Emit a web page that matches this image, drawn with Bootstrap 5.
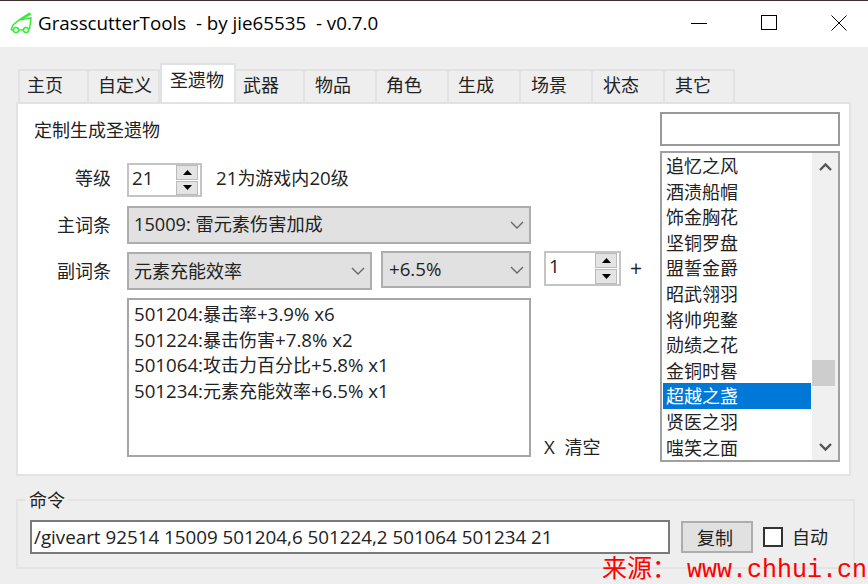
<!DOCTYPE html>
<html lang="zh-CN">
<head>
<meta charset="utf-8">
<title>GrasscutterTools</title>
<link href="https://cdn.jsdelivr.net/npm/bootstrap@5.3.0/dist/css/bootstrap.min.css" rel="stylesheet">
<style>
html,body{height:100%;}
body{background:#eee;color:#222;font:18.7px/26px "Open Sans","Noto Sans CJK SC",sans-serif;overflow:hidden;position:relative;}
.cj{font-size:18px;}
.titlebar{height:47px;background:#fff;border-top:1px solid #3b2e2c;color:#000;padding:0 21px 3px 10px;}
.titlebar .tt{margin-left:6px;white-space:pre;font-size:18.75px;}
.wincontrols{gap:54px;}
.tabstrip{margin:18px 0 0 18px;height:37px;border:0;flex-wrap:nowrap;}
.tabstrip .nav-link{height:33px;margin:4px 0 0 0;padding:0 0 0 9px;border:2px solid #e2e2e2;border-bottom:0;border-left-width:0;border-radius:0;background:#eee;color:#222;line-height:28px;font-size:18px;width:72px;}
.tabstrip .nav-item:first-child .nav-link{width:71px;border-left-width:2px;padding-left:7px;}
.tabstrip .nav-link.active{height:39px;margin-top:-2px;width:76px;padding:1px 0 0 8px;background:#fff;color:#222;border-left-width:2px;position:relative;z-index:2;}
.tabstrip .nav-item:nth-child(2) .nav-link{width:71px;}
.tabstrip .nav-item:nth-child(4) .nav-link{width:69px;padding-left:7px;}
.tabstrip .nav-item:nth-child(5) .nav-link,.tabstrip .nav-item:nth-child(8) .nav-link,.tabstrip .nav-item:nth-child(9) .nav-link,.tabstrip .nav-item:nth-child(10) .nav-link{padding-left:10px;}
.tabstrip .nav-item:last-child .nav-link{width:70px;}
.panel{margin-left:16px;width:835px;height:374px;background:#fff;border:2px solid #e2e2e2;}
.leftcol{width:642px;}
.headline{height:59px;padding:13px 0 0 16px;}
.lab{width:93px;margin-right:16px;text-align:right;}
.row1{height:34px;}
.row2{height:38px;margin-top:9px;}
.row3{height:39px;margin-top:7px;}
.row4{height:159px;margin-top:8px;}
.row1 .lab,.row1 .note{margin-top:-4px;}
.note{margin-left:14px;}
.spin{border:2px solid #c4c4c4;height:34px;background:#fff;padding:0 2px;}
.spin1{width:75px;}
.spin2{width:77px;height:35px;margin-left:13px;}
.spinval{flex:1;padding-left:1px;line-height:26px;}
.spinbtns{width:22px;gap:1px;}
.spinbtns i{display:flex;flex:1;align-items:center;justify-content:center;background:#e4e4e4;border:1px solid #bbb;}
.dd{appearance:none;border:2px solid #adadad;border-radius:0;background-color:#e1e1e1;background-image:url("data:image/svg+xml,%3Csvg xmlns='http://www.w3.org/2000/svg' width='14' height='8' fill='none' stroke='%23666' stroke-width='1.4'%3E%3Cpath d='M1 1l6 6 6-6'/%3E%3C/svg%3E");background-size:14px 8px;background-position:right 5px center;height:38px;padding:0 24px 0 5px;color:#222;font-size:18.2px;box-shadow:none;}
.dd-main{width:404px;}
.dd-a{width:245px;margin-top:1px;font-size:18px;}
.dd-b{width:150px;height:37px;margin-left:9px;padding-left:6px;font-size:18.7px;}
.plus{margin-left:9px;line-height:34px;font-size:21px;}
.memo{width:404px;height:159px;border:2px solid #a6a6a6;padding:1px 5px;}
.memo div{white-space:pre;height:25.6px;line-height:25.6px;}
.clearx{margin:0 0 -2px 13px;line-height:24px;white-space:pre;}
.rightcol{width:180px;padding-top:8px;}
.searchbox{height:34px;border:2px solid #999;border-radius:0;padding:0 4px;box-shadow:none;}
.listwrap{height:311px;margin-top:5px;border:2px solid #a0a0a0;}
.arlist{flex:1;padding:0 1px;overflow:hidden;}
.aritem{height:25.6px;line-height:26px;padding-left:3px;font-size:18px;}
.aritem.sel{background:#0078d7;color:#fff;}
.sbar{width:26px;background:#f0f0f0;}
.sarrow{height:26px;}
.sthumb{width:23px;height:26px;margin-top:181px;background:#cdcdcd;}
.grp{margin:23px 0 0 16px;width:839px;height:70px;border:2px solid #e4e4e4;position:relative;padding:19px 0 0 12px;}
.grplab{position:absolute;left:8px;top:-14px;background:#eee;padding:0 3px;font-size:18px;line-height:26px;}
.cmd{width:640px;height:34px;border:2px solid #7a7a7a;border-radius:0;padding:0 2px;font-size:18.8px;color:#222;box-shadow:none;}
.copybtn{width:72px;height:32px;margin:1px 0 0 11px;background:#e1e1e1;border:2px solid #adadad;border-radius:0;padding:2px 4px 0 0;color:#222;font-size:18px;line-height:26px;}
.copybtn:hover{background:#e1e1e1;border-color:#adadad;color:#222;}
.checkwrap .tick{width:20px;height:20px;margin:0;border:2px solid #333;border-radius:0;float:none;}
.autolab{margin-left:9px;font-size:18px;}
.checkwrap{margin:0 0 0 10px;padding:0;min-height:0;height:34px;}
.wm{position:absolute;left:602px;top:558px;color:#f00;white-space:pre;font:25px/25px "Liberation Mono","Noto Sans CJK SC",monospace;}
.wm b{font-weight:400;margin-left:10px;}
</style>
</head>
<body>
<div class="titlebar d-flex align-items-center">
  <svg width="22" height="22" viewBox="0 0 22 22" fill="none" stroke="#3be93b" stroke-width="1.5"><path d="M1 18 L3 13 L9 8 L21 6 L19.500 17 H18.500 M13.500 18 H8.500 M3.500 18 H1 M9 8 L20 1 M12 6.500 L21 2"/><circle cx="6" cy="18" r="2.500"/><circle cx="16" cy="18" r="2.500"/></svg>
  <span class="tt">GrasscutterTools  - by jie65535  - v0.7.0</span>
  <div class="ms-auto d-flex wincontrols">
    <svg width="16" height="16" stroke="#000"><path d="M0 8.5H16"/></svg>
    <svg width="16" height="16" fill="none" stroke="#000"><rect x=".5" y=".5" width="15" height="14"/></svg>
    <svg width="16" height="16" stroke="#000"><path d="M.5 .5L15.5 15.5M15.5 .5L.5 15.5"/></svg>
  </div>
</div>
<ul class="nav nav-tabs tabstrip">
  <li class="nav-item"><a class="nav-link" href="#">主页</a></li>
  <li class="nav-item"><a class="nav-link" href="#">自定义</a></li>
  <li class="nav-item"><a class="nav-link active" href="#">圣遗物</a></li>
  <li class="nav-item"><a class="nav-link" href="#">武器</a></li>
  <li class="nav-item"><a class="nav-link" href="#">物品</a></li>
  <li class="nav-item"><a class="nav-link" href="#">角色</a></li>
  <li class="nav-item"><a class="nav-link" href="#">生成</a></li>
  <li class="nav-item"><a class="nav-link" href="#">场景</a></li>
  <li class="nav-item"><a class="nav-link" href="#">状态</a></li>
  <li class="nav-item"><a class="nav-link" href="#">其它</a></li>
</ul>
<div class="panel d-flex">
  <div class="leftcol">
    <div class="headline cj">定制生成圣遗物</div>
    <div class="d-flex row1 align-items-center">
      <div class="lab cj">等级</div>
      <div class="spin spin1 d-flex"><span class="spinval">21</span><span class="spinbtns d-flex flex-column"><i><svg width="9" height="5"><path d="M4.5 0L9 5H0Z"/></svg></i><i><svg width="9" height="5"><path d="M0 0H9L4.5 5Z"/></svg></i></span></div>
      <div class="note">21<span class="cj">为游戏内</span>20<span class="cj">级</span></div>
    </div>
    <div class="d-flex row2 align-items-center">
      <div class="lab cj">主词条</div>
      <select class="form-select dd dd-main"><option>15009: 雷元素伤害加成</option></select>
    </div>
    <div class="d-flex row3 align-items-center">
      <div class="lab cj">副词条</div>
      <select class="form-select dd dd-a align-self-start"><option>元素充能效率</option></select>
      <select class="form-select dd dd-b align-self-start"><option>+6.5%</option></select>
      <div class="spin spin2 d-flex align-self-start"><span class="spinval">1</span><span class="spinbtns d-flex flex-column"><i><svg width="9" height="5"><path d="M4.5 0L9 5H0Z"/></svg></i><i><svg width="9" height="5"><path d="M0 0H9L4.5 5Z"/></svg></i></span></div>
      <div class="plus align-self-start">+</div>
    </div>
    <div class="d-flex row4 align-items-end">
      <div class="lab"></div>
      <div class="memo">
        <div>501204:<span class="cj">暴击率</span>+3.9% x6</div>
        <div>501224:<span class="cj">暴击伤害</span>+7.8% x2</div>
        <div>501064:<span class="cj">攻击力百分比</span>+5.8% x1</div>
        <div>501234:<span class="cj">元素充能效率</span>+6.5% x1</div>
      </div>
      <div class="clearx">X  <span class="cj">清空</span></div>
    </div>
  </div>
  <div class="rightcol">
    <input class="form-control searchbox" type="text" aria-label="搜索">
    <div class="listwrap d-flex">
      <div class="arlist">
        <div class="aritem">追忆之风</div><div class="aritem">酒渍船帽</div><div class="aritem">饰金胸花</div><div class="aritem">坚铜罗盘</div><div class="aritem">盟誓金爵</div><div class="aritem">昭武翎羽</div><div class="aritem">将帅兜鍪</div><div class="aritem">勋绩之花</div><div class="aritem">金铜时晷</div><div class="aritem sel">超越之盏</div><div class="aritem">贤医之羽</div><div class="aritem">嗤笑之面</div>
      </div>
      <div class="sbar d-flex flex-column">
        <div class="sarrow d-flex align-items-center justify-content-center"><svg width="13" height="9" fill="none" stroke="#555" stroke-width="2.4"><path d="M1 8L6.5 2.5L12 8"/></svg></div>
        <div class="sthumb"></div>
        <div class="sarrow mt-auto d-flex align-items-center justify-content-center"><svg width="13" height="9" fill="none" stroke="#555" stroke-width="2.4"><path d="M1 1L6.5 6.5L12 1"/></svg></div>
      </div>
    </div>
  </div>
</div>
<div class="grp">
  <div class="grplab">命令</div>
  <div class="d-flex align-items-start">
    <input class="form-control cmd" type="text" value="/giveart 92514 15009 501204,6 501224,2 501064 501234 21">
    <button type="button" class="btn copybtn">复制</button>
    <div class="form-check checkwrap d-flex align-items-center">
      <input class="form-check-input tick" type="checkbox" id="autoc">
      <label class="form-check-label autolab" for="autoc">自动</label>
    </div>
  </div>
</div>
<div class="wm"><span>来源：</span><b>www.chhui.cn</b></div>
<script src="https://cdn.jsdelivr.net/npm/bootstrap@5.3.0/dist/js/bootstrap.bundle.min.js"></script>
</body>
</html>
